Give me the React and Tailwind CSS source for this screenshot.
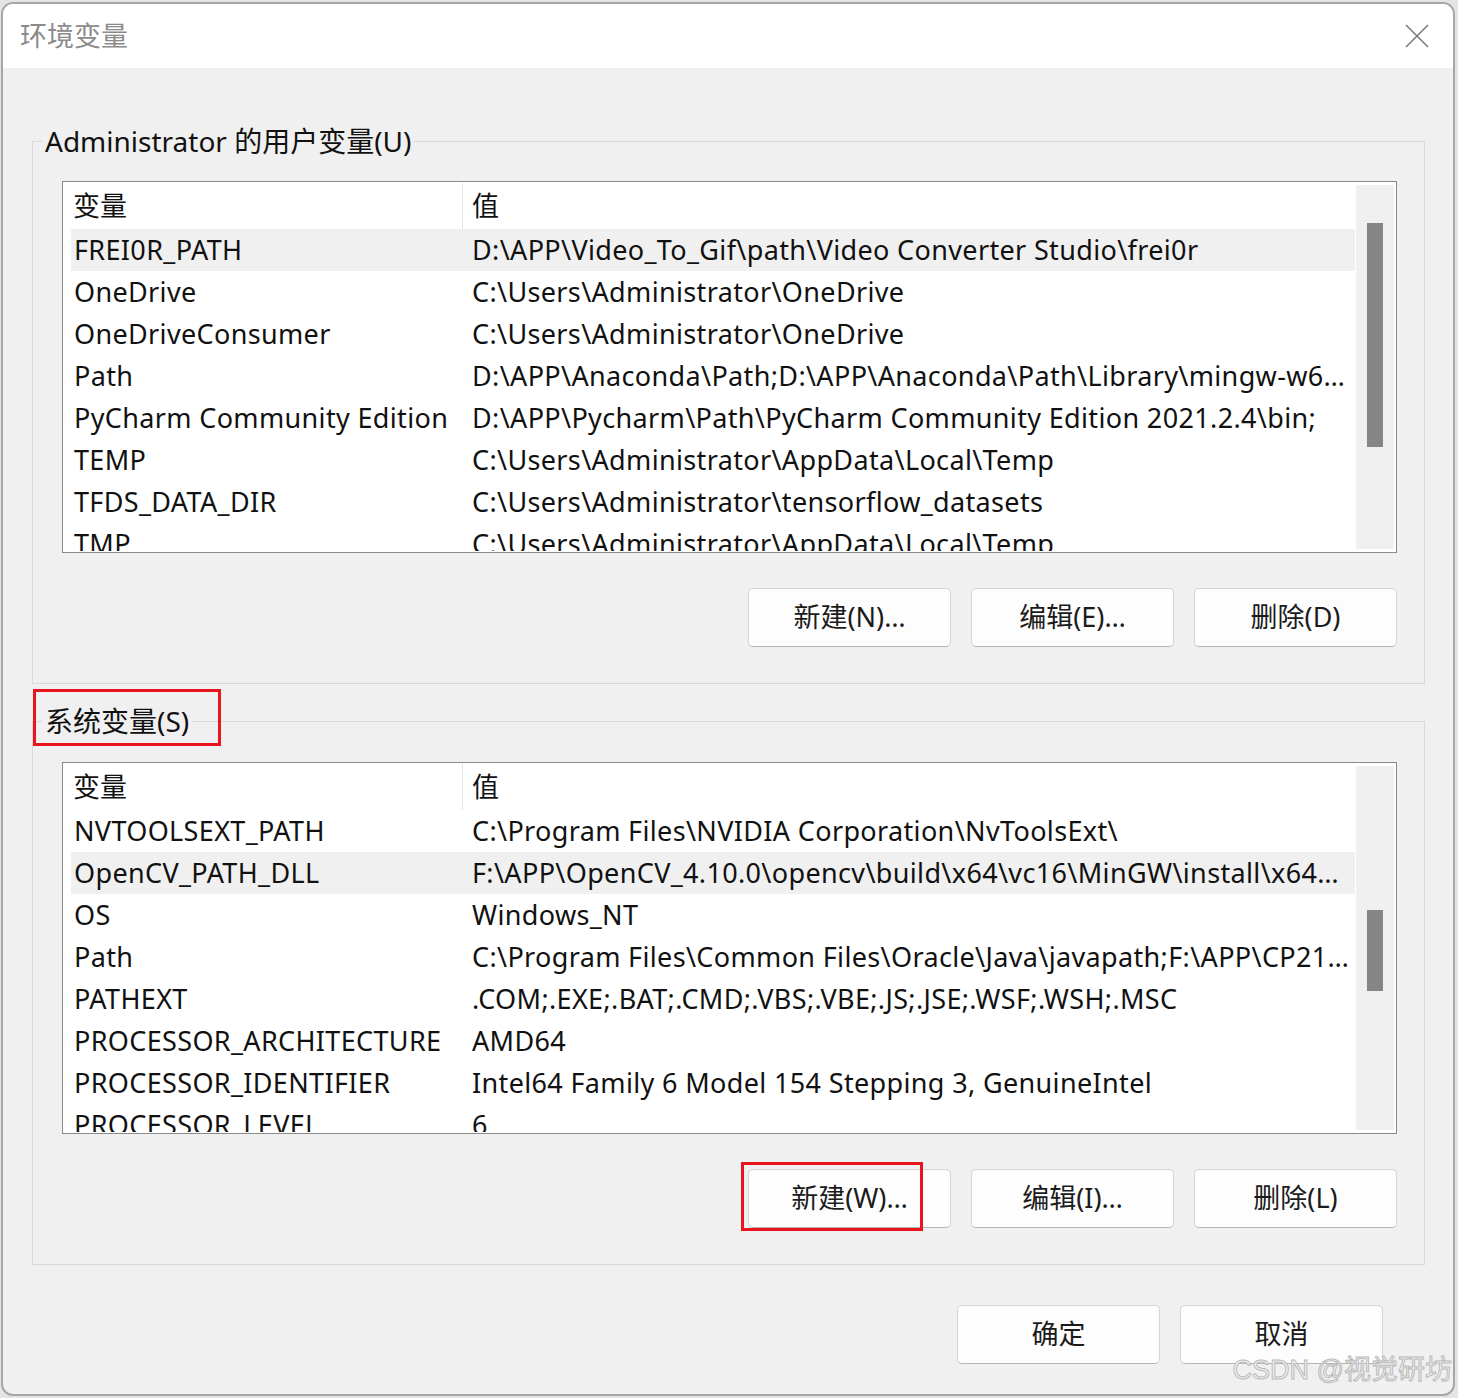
import React from "react";

const userVars = [
  ["FREI0R_PATH", "D:\\APP\\Video_To_Gif\\path\\Video Converter Studio\\frei0r"],
  ["OneDrive", "C:\\Users\\Administrator\\OneDrive"],
  ["OneDriveConsumer", "C:\\Users\\Administrator\\OneDrive"],
  ["Path", "D:\\APP\\Anaconda\\Path;D:\\APP\\Anaconda\\Path\\Library\\mingw-w6…"],
  ["PyCharm Community Edition", "D:\\APP\\Pycharm\\Path\\PyCharm Community Edition 2021.2.4\\bin;"],
  ["TEMP", "C:\\Users\\Administrator\\AppData\\Local\\Temp"],
  ["TFDS_DATA_DIR", "C:\\Users\\Administrator\\tensorflow_datasets"],
  ["TMP", "C:\\Users\\Administrator\\AppData\\Local\\Temp"],
];

const sysVars = [
  ["NVTOOLSEXT_PATH", "C:\\Program Files\\NVIDIA Corporation\\NvToolsExt\\"],
  ["OpenCV_PATH_DLL", "F:\\APP\\OpenCV_4.10.0\\opencv\\build\\x64\\vc16\\MinGW\\install\\x64…"],
  ["OS", "Windows_NT"],
  ["Path", "C:\\Program Files\\Common Files\\Oracle\\Java\\javapath;F:\\APP\\CP21…"],
  ["PATHEXT", ".COM;.EXE;.BAT;.CMD;.VBS;.VBE;.JS;.JSE;.WSF;.WSH;.MSC"],
  ["PROCESSOR_ARCHITECTURE", "AMD64"],
  ["PROCESSOR_IDENTIFIER", "Intel64 Family 6 Model 154 Stepping 3, GenuineIntel"],
  ["PROCESSOR_LEVEL", "6"],
];

function WinButton({ children }) {
  return (
    <button className="w-[203px] h-[59px] rounded-[5px] bg-[#fdfdfd] border border-[#d4d4d4] border-b-[#b5b5b5] text-[27px] text-[#1b1b1b] flex items-center justify-center">
      {children}
    </button>
  );
}

function VarList({ rows, selected, thumbTop, thumbHeight }) {
  return (
    <div className="h-[372px] border border-[#8a8a8a] bg-white p-[1px] flex">
      <div className="flex-1 flex flex-col overflow-hidden">
        <div className="h-[46px] shrink-0 flex items-center text-[27px] text-[#111]">
          <div className="w-[399px] h-full pl-[9px] flex items-center border-r border-[#e3e3e3]">变量</div>
          <div className="pl-[9px]">值</div>
        </div>
        {rows.map(([name, value], i) => (
          <div
            key={name + i}
            className={
              "h-[42px] shrink-0 ml-[7px] flex items-center text-[27px] tracking-[0.35px] text-[#111] whitespace-nowrap " +
              (i === selected ? "bg-[#f0f0f0]" : "")
            }
          >
            <div className="w-[401px] pl-[3px] overflow-hidden">{name}</div>
            <div className="flex-1 overflow-hidden">{value}</div>
          </div>
        ))}
      </div>
      <div className="w-[40px] my-[1px] bg-[#f0f0f0] border border-white relative">
        <div
          className="absolute left-[11px] w-[16px] bg-[#858585]"
          style={{ top: thumbTop, height: thumbHeight }}
        />
      </div>
    </div>
  );
}

export default function App() {
  return (
    <div className="relative w-[1458px] h-[1398px] bg-[#e4e4e4] pl-[1px] pt-[2px] font-['Noto_Sans','Noto_Sans_CJK_SC',sans-serif] overflow-hidden">
      <div className="w-[1454px] h-[1394px] rounded-[12px] border-2 border-[#a6a6a6] bg-[#f0f0f0] overflow-hidden flex flex-col">
        <div className="h-[64px] shrink-0 bg-white flex items-center justify-between pl-[17px] pr-[24px]">
          <span className="text-[27px] text-[#8b8b8b]">环境变量</span>
          <svg width="24" height="24" viewBox="0 0 24 24" fill="none" stroke="#7c7c7c" strokeWidth="1.6">
            <path d="M1 1L23 23M23 1L1 23" />
          </svg>
        </div>

        <div className="flex flex-col pl-[29px] pr-[28px] pt-[53px]">
          <fieldset className="border border-[#d9d9d9] p-0 m-0">
            <legend className="ml-[9px] px-[3px] text-[28px] leading-[40px] text-[#111]">
              Administrator 的用户变量(U)
            </legend>
            <div className="pl-[29px] pr-[27px] pt-[20px] pb-[36px] flex flex-col">
              <VarList rows={userVars} selected={0} thumbTop={38} thumbHeight={224} />
              <div className="mt-[35px] flex justify-end gap-[20px]">
                <WinButton>新建(N)…</WinButton>
                <WinButton>编辑(E)…</WinButton>
                <WinButton>删除(D)</WinButton>
              </div>
            </div>
          </fieldset>

          <fieldset className="mt-[17px] border border-[#d9d9d9] p-0 m-0">
            <legend className="relative ml-[9px] px-[3px] text-[28px] leading-[40px] text-[#111]">
              系统变量(S)
              <span className="absolute left-[-9px] top-[-12px] w-[188px] h-[57px] border-[3px] border-[#e8141e]" />
            </legend>
            <div className="pl-[29px] pr-[27px] pt-[21px] pb-[36px] flex flex-col">
              <VarList rows={sysVars} selected={1} thumbTop={144} thumbHeight={81} />
              <div className="mt-[35px] flex justify-end gap-[20px]">
                <div className="relative">
                  <WinButton>新建(W)…</WinButton>
                  <span className="absolute left-[-7px] top-[-7px] w-[182px] h-[69px] border-[3px] border-[#e8141e]" />
                </div>
                <WinButton>编辑(I)…</WinButton>
                <WinButton>删除(L)</WinButton>
              </div>
            </div>
          </fieldset>
        </div>

        <div className="mt-[40px] flex justify-end gap-[20px] pr-[70px]">
          <WinButton>确定</WinButton>
          <WinButton>取消</WinButton>
        </div>
      </div>

      <div className="absolute right-[6px] bottom-[8px] text-[27px] text-[#f4f4f4] [-webkit-text-stroke:1px_#b9b9b9] font-['Liberation_Sans','Noto_Sans_CJK_SC',sans-serif]">
        CSDN @视觉研坊
      </div>
    </div>
  );
}
